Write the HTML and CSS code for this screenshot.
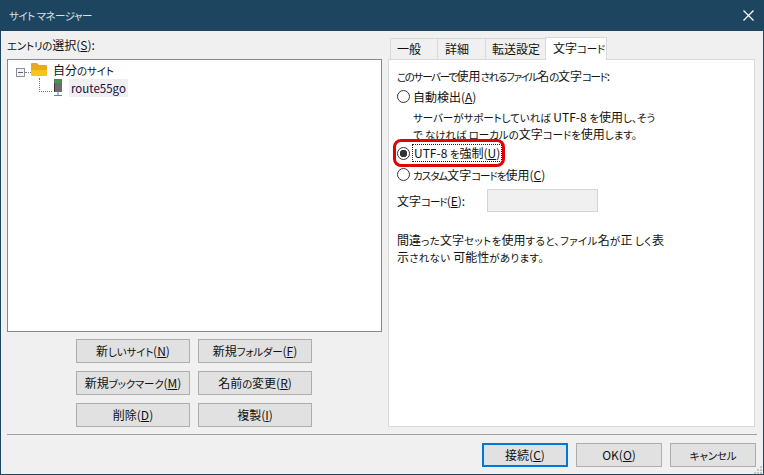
FILE: index.html
```html
<!DOCTYPE html>
<html lang="ja">
<head>
<meta charset="utf-8">
<title>サイトマネージャー</title>
<link rel="stylesheet" href="styles.css">
</head>
<body>
<div class="window">
  <header class="titlebar">
    <span class="title k">サイト マネージャー</span>
    <svg class="close" width="11" height="11" viewBox="0 0 11 11"><path d="M0.5 0.5 L10.5 10.5 M10.5 0.5 L0.5 10.5" stroke="#fff" stroke-width="1.3" fill="none"/></svg>
  </header>
  <div class="client">
    <div class="main">
      <section class="left">
        <div class="entry-label"><span class="k">エントリの</span>選択(<u>S</u>):</div>
        <div class="tree">
          <div class="tree-row">
            <span class="expander"></span>
            <span class="dots-h"></span>
            <svg class="folder" width="16" height="16" viewBox="0 0 16 16"><path d="M0 2 Q0 1 1 1 H6 L8 3 H15 Q16 3 16 4 V8 H0 Z" fill="#e5ac1c"/><path d="M0 8 H16 V13 Q16 14 15 14 H1 Q0 14 0 13 Z" fill="#fdc31c"/></svg>
            <span class="tree-text">自分<span class="k">のサイト</span></span>
          </div>
          <div class="tree-row child">
            <span class="dots-l"></span>
            <svg class="server" width="12" height="18" viewBox="0 0 12 18"><rect x="2" y="0" width="8" height="13" fill="#6c6c6c"/><rect x="3" y="1" width="6" height="3" fill="#3f9b45"/><rect x="2" y="4" width="1" height="9" fill="#3c3c3c"/><rect x="5.500" y="13" width="1" height="3" fill="#5a7fa8"/><rect x="2" y="16" width="8" height="1" fill="#5a7fa8"/></svg>
            <span class="tree-text selected">route55go</span>
          </div>
        </div>
        <div class="site-buttons">
          <button class="btn">新<span class="k">しいサイト</span>(<u>N</u>)</button>
          <button class="btn">新規<span class="k">フォルダー</span>(<u>F</u>)</button>
          <button class="btn">新規<span class="k">ブックマーク</span>(<u>M</u>)</button>
          <button class="btn">名前<span class="k">の</span>変更(<u>R</u>)</button>
          <button class="btn">削除(<u>D</u>)</button>
          <button class="btn">複製(<u>I</u>)</button>
        </div>
      </section>
      <section class="right">
        <div class="tabs">
          <div class="tab t1">一般</div>
          <div class="tab t2">詳細</div>
          <div class="tab t3">転送設定</div>
          <div class="tab t4 active">文字<span class="k">コード</span></div>
        </div>
        <div class="panel">
          <p class="heading"><span class="k">このサーバーで</span>使用<span class="k">されるファイル</span>名<span class="k">の</span>文字<span class="k">コード</span>:</p>
          <label class="radio r-auto"><span class="circle"></span><span>自動検出(<u>A</u>)</span></label>
          <p class="note"><span class="k">サーバーがサポートしていれば</span> UTF-8 <span class="k">を</span>使用<span class="k">し、そう</span><br><span class="k">で なければ ローカルの</span>文字<span class="k">コードを</span>使用<span class="k">します。</span></p>
          <label class="radio r-utf"><span class="circle checked"></span><span class="focus">UTF-8 <span class="k">を</span>強制(<u>U</u>)</span></label>
          <label class="radio r-custom"><span class="circle"></span><span><span class="k">カスタム</span>文字<span class="k">コードを</span>使用(<u>C</u>)</span></label>
          <div class="code-row">
            <span class="code-label">文字<span class="k">コード</span>(<u>E</u>):</span>
            <span class="code-input"></span>
          </div>
          <p class="warning">間違<span class="k">った</span>文字<span class="k">セットを</span>使用<span class="k">すると、ファイル</span>名<span class="k">が</span>正 <span class="k">しく</span>表<br>示<span class="k">されない </span>可能性<span class="k">があります。</span></p>
          <div class="highlight"></div>
        </div>
      </section>
    </div>
    <div class="separator"></div>
    <footer class="footer">
      <button class="btn wide default">接続(<u>C</u>)</button>
      <button class="btn wide">OK(<u>O</u>)</button>
      <button class="btn wide"><span class="k">キャンセル</span></button>
    </footer>
    <svg class="grip" width="8" height="8" viewBox="0 0 8 8"><path d="M6 0h2v2H6zM3 3h2v2H3zM6 3h2v2H6zM0 6h2v2H0zM3 6h2v2H3zM6 6h2v2H6z" fill="#c4c4c4"/></svg>
  </div>
</div>
</body>
</html>
```
FILE: styles.css
```css
* { box-sizing: border-box; }
html, body { margin: 0; padding: 0; }
body {
  width: 764px;
  height: 475px;
  overflow: hidden;
  font-family: "Noto Sans CJK JP", "Noto Sans", sans-serif;
  font-size: 12px;
  font-feature-settings: "palt";
  color: #111;
}
.k { font-size: 10.5px; letter-spacing: -0.2px; }
u { text-underline-offset: 1px; }
p { margin: 0; }
.window {
  width: 764px;
  height: 475px;
  display: flex;
  flex-direction: column;
  border: 1px solid #1d4560;
  border-top: 0;
  background: #f0f0f0;
}
.titlebar {
  height: 31px;
  margin: 0 -1px;
  flex: none;
  background: #1d4560;
  color: #d8e2e8;
  display: flex;
  align-items: center;
  justify-content: space-between;
  padding: 0 10px 0 9px;
}
.title.k { letter-spacing: -0.5px; }
.close { display: block; }
.client {
  flex: 1;
  position: relative;
  display: flex;
  flex-direction: column;
  padding: 6px 6px 7px 6px;
}
.main { display: flex; flex: none; height: 390px; }
.left { width: 375px; display: flex; flex-direction: column; }
.entry-label { height: 22px; line-height: 16px; }
.tree {
  height: 273px;
  background: #fff;
  border: 1px solid #828790;
  padding: 1px 0 0 8px;
}
.tree-row { display: flex; align-items: center; height: 18px; }
.expander {
  width: 9px;
  height: 9px;
  margin-top: 4px;
  border: 1px solid #8a8f98;
  background: linear-gradient(#5a6270, #5a6270) center / 5px 1px no-repeat, #f4f4f4;
}
.dots-h { width: 6px; margin-top: 4px; border-top: 1px dotted #777; }
.folder { margin-right: 6px; }
.tree-text { line-height: 18px; }
.child { padding-left: 23px; }
.dots-l {
  width: 13px;
  height: 14px;
  margin-top: -6px;
  border-left: 1px dotted #777;
  border-bottom: 1px dotted #777;
}
.server { margin-right: 5px; }
.selected { background: #efefef; padding: 0 2px; color: #200a40; font-size: 11.5px; }
.site-buttons {
  margin: 7px 0 0 69px;
  display: grid;
  grid-template-columns: 114px 114px;
  grid-auto-rows: 24px;
  gap: 8px;
}
.btn {
  font: inherit;
  font-feature-settings: inherit;
  color: inherit;
  background: #e1e1e1;
  border: 1px solid #adadad;
  padding: 0 0 2px;
  white-space: nowrap;
}
.right {
  margin-left: 6px;
  width: 367px;
  position: relative;
  display: flex;
  flex-direction: column;
}
.tabs { display: flex; height: 22px; padding: 2px 0 0 2px; flex: none; align-items: flex-end; }
.tab {
  height: 21px;
  background: #f0f0f0;
  border: 1px solid #d9d9d9;
  border-bottom: 0;
  border-right: 0;
  padding-left: 6px;
  line-height: 20px;
  white-space: nowrap;
}
.t1 { width: 47px; }
.t2 { width: 48px; padding-left: 7px; }
.t3 { width: 60px; }
.t4 { width: 62px; padding-left: 7px; }
.tab.active {
  height: 23px;
  background: #fff;
  border-right: 1px solid #d9d9d9;
  position: relative;
  z-index: 1;
  margin-bottom: -1px;
}
.panel {
  height: 368px;
  background: #fff;
  border: 1px solid #d9d9d9;
  position: relative;
  padding: 0 8px;
  display: flex;
  flex-direction: column;
}
.heading { margin-top: 7px; line-height: 17px; height: 17px; }
.heading .k { letter-spacing: -1.3px; }
.radio { display: flex; align-items: center; height: 18px; }
.r-auto { margin-top: 3px; }
.note { margin: 4px 0 0 16px; line-height: 16px; height: 32px; }
.note .k { letter-spacing: -0.05px; }
.r-utf { margin-top: 3px; }
.r-custom { margin-top: 3px; }
.r-custom .k { letter-spacing: -1px; }
.circle {
  width: 13px;
  height: 13px;
  border: 1px solid #333;
  border-radius: 50%;
  margin-right: 3px;
  background: #fff;
  flex: none;
}
.checked { background: radial-gradient(circle, #333 0 3.5px, #fff 4px); }
.focus { outline: 1px dotted #222; padding: 0 1px; line-height: 15px; }
.code-row { display: flex; align-items: center; margin-top: 6px; height: 23px; }
.code-label { width: 90px; }
.code-label .k { letter-spacing: -1px; }
.code-input { width: 111px; height: 23px; background: #f0f0f0; border: 1px solid #d4d4d4; }
.warning { margin-top: 20px; line-height: 16px; }
.warning .k { letter-spacing: 0.35px; }
.highlight {
  position: absolute;
  left: 4px;
  top: 79px;
  width: 112px;
  height: 28px;
  border: 3px solid #e60000;
  border-radius: 8px;
  pointer-events: none;
}
.separator { height: 1px; background: #a0a0a0; margin: 7px 0 0 0; flex: none; }
.footer { display: flex; justify-content: flex-end; gap: 8px; padding: 8px 1px 0 0; }
.wide { width: 86px; height: 24px; }
.default { border: 2px solid #0078d7; }
.grip { position: absolute; right: 1px; bottom: 0; }
```
